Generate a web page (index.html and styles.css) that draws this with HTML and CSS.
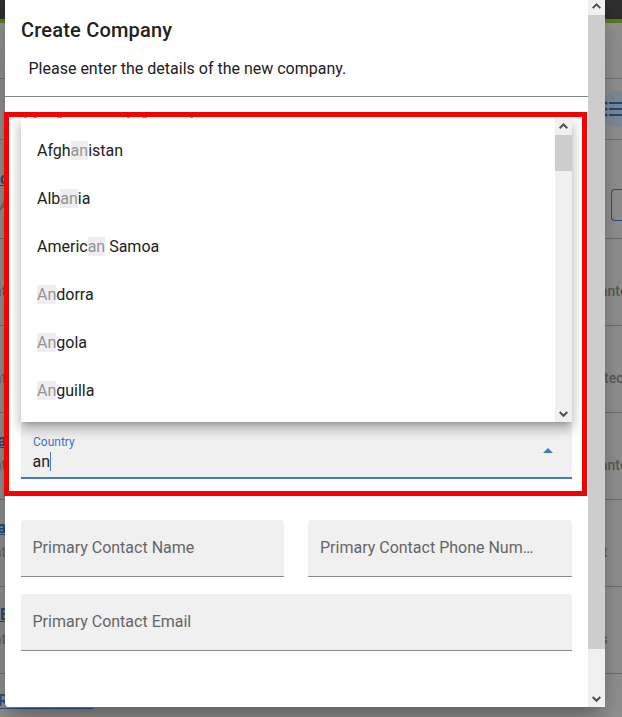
FILE: index.html
```html
<!DOCTYPE html>
<html lang="en">
<head>
<meta charset="utf-8">
<title>Create Company</title>
<link rel="stylesheet" href="styles.css">
</head>
<body>
<div class="page">
  <div class="topbar"></div>
  <div class="toolbar-space"></div>
  <div class="toolbar">
    <div class="view-toggle">
      <svg width="26" height="18" viewBox="0 0 26 18"><g fill="#234f80"><circle cx="6" cy="3" r="1.6"/><circle cx="6" cy="9" r="1.6"/><circle cx="6" cy="15" r="1.6"/><path d="M9 2h17v2H9zM9 8h17v2H9zM9 14h17v2H9z"/></g></svg>
    </div>
  </div>
  <div class="row tall"><div class="cell"><b class="link start">c</b><i class="sub start">A</i></div><div class="outline-button"></div></div>
  <div class="row"><div class="cell"><span class="mid">nt</span></div><div class="side">ante</div></div>
  <div class="row"><div class="cell"><span class="mid">nt</span></div><div class="side tec">tec</div></div>
  <div class="row"><div class="cell"><b class="link">a</b><span class="sub">nt</span></div><div class="side">ante</div></div>
  <div class="row"><div class="cell"><b class="link">a</b><span class="sub">nt</span></div><div class="side blue short">nt</div></div>
  <div class="row"><div class="cell"><b class="link start">E</b><span class="sub">nt</span></div><div class="side blue as">as</div></div>
  <div class="row last"><div class="last-link">R</div></div>
</div>

<div class="dialog">
  <div class="content">
    <header class="head">
      <h1>Create Company</h1>
      <p>Please enter the details of the new company.</p>
    </header>
    <div class="form">
      <div class="field country">
        <div><label>Country</label><div class="value">an<span class="caret"></span></div></div>
        <span class="arrow"></span>
      </div>
      <div class="pair">
        <div class="field">Primary Contact Name</div>
        <div class="field phone">Primary Contact Phone Num…</div>
      </div>
      <div class="field">Primary Contact Email</div>
    </div>
  </div>
  <div class="scrollbar main-scroll">
    <svg class="up" width="17" height="15" viewBox="0 0 17 15"><path d="M4.7 8.1 8.5 4.3l3.8 3.8"/></svg>
    <div class="thumb"></div>
    <svg class="down" width="17" height="17" viewBox="0 0 17 17"><path d="M4.7 7 8.5 10.8 12.3 7"/></svg>
  </div>
</div>

<div class="highlight">
  <svg class="heading-edge" width="180" height="1" viewBox="0 0 180 1"><path fill="#b0a34b" d="M3 0h3v1H3zM12 0h4v1h-4zM36 0h5v1h-5zM106 0h3v1h-3zM121 0h5v1h-5zM169 0h3v1h-3z"/></svg>
  <div class="menu">
    <ul>
      <li>Afgh<mark>an</mark>istan</li>
      <li>Alb<mark>an</mark>ia</li>
      <li>Americ<mark>an</mark> Samoa</li>
      <li><mark>An</mark>dorra</li>
      <li><mark>An</mark>gola</li>
      <li><mark>An</mark>guilla</li>
    </ul>
    <div class="scrollbar">
      <svg class="up" width="17" height="17" viewBox="0 0 17 17"><path d="M4.7 10.3 8.5 6.5l3.8 3.8"/></svg>
      <div class="thumb"></div>
      <svg class="down" width="17" height="17" viewBox="0 0 17 17"><path d="M4.7 7 8.5 10.8 12.3 7"/></svg>
    </div>
  </div>
</div>
</body>
</html>
```
FILE: styles.css
```css
* { box-sizing: border-box; }
body {
  margin: 0;
  width: 622px;
  height: 717px;
  overflow: hidden;
  position: relative;
  font-family: Roboto, "Liberation Sans", sans-serif;
  font-size: 16px;
  color: #212121;
}
svg { display: block; }

.page { height: 717px; background: #989898; overflow: hidden; }
.topbar { height: 23px; background: #303030; border-bottom: 4px solid #5d8021; }
.toolbar-space { height: 56px; border-bottom: 1px solid #7c7c7c; }
.toolbar { height: 61px; padding: 12px 0 0 600px; border-bottom: 1px solid #7c7c7c; }
.view-toggle {
  width: 36px;
  height: 36px;
  padding-top: 9px;
  border-radius: 18px;
  background: #8792a1;
}
.row {
  height: 87px;
  border-bottom: 1px solid #747474;
  display: flex;
  justify-content: space-between;
  font-size: 14px;
  color: #666;
}
.row.tall { height: 99px; }
.row.last { border: 0; height: 44px; }
.cell {
  width: 6px;
  display: flex;
  flex-direction: column;
  align-items: flex-end;
}
.link {
  margin: 18px 0 2px;
  height: 20px;
  line-height: 20px;
  color: #264f7e;
  font-size: 16px;
  text-decoration: underline;
}
.start { align-self: flex-start; }
.sub { height: 24px; line-height: 24px; }
.tall .link { margin: 29px 0 0; }
.tall .sub { line-height: 32px; }
.mid { margin-top: 43px; line-height: 18px; }
.side { width: 22px; padding-top: 43px; line-height: 18px; font-weight: 500; color: #5e5e5e; }
.tec { width: 18px; }
.blue { color: #586273; }
.short { width: 27px; }
.as { width: 29px; }
.outline-button { width: 11px; height: 32px; margin-top: 49px; border: 1px solid #28588d; border-right: 0; border-radius: 4px 0 0 4px; }
.last-link {
  width: 95px;
  height: 35px;
  margin-left: -2px;
  padding-top: 17px;
  line-height: 20px;
  font-size: 16px;
  font-weight: 700;
  color: #2b5788;
  border-bottom: 1px solid #2b5788;
}

.dialog {
  position: absolute;
  left: 5px;
  top: 0;
  width: 600px;
  height: 707px;
  display: flex;
  background: #fff;
  border-radius: 0 0 0 4px;
  box-shadow: 0 11px 15px -7px rgba(0,0,0,.2), 0 24px 38px 3px rgba(0,0,0,.14), 0 9px 46px 8px rgba(0,0,0,.12);
}
.content { width: 583px; }
.head { height: 97px; padding: 18px 16px 0; border-bottom: 1px solid #858585; }
h1 { margin: 0; font-size: 20px; line-height: 24px; font-weight: 500; letter-spacing: .2px; }
p { margin: 15px 0 0 7.5px; line-height: 24px; }
.form { padding: 325px 16px 0; display: flex; flex-direction: column; }
.field {
  height: 57px;
  padding: 0 11.5px;
  line-height: 55px;
  color: #666;
  background: #f0f0f0;
  border-bottom: 1px solid #8a8a8a;
  border-radius: 4px 4px 0 0;
}
.phone { padding: 0 12px; }
.country {
  display: flex;
  justify-content: space-between;
  padding: 0 12px;
  border-bottom: 2px solid #3f7cc4;
  border-radius: 0;
  line-height: normal;
}
.country label { display: block; margin-top: 12px; font-size: 12px; line-height: 16px; color: #3877bf; }
.value { display: flex; align-items: center; height: 22px; margin-left: -.5px; color: #212121; }
.caret { width: 1px; height: 19px; background: #3f7cc4; }
.arrow { margin: 26px 7px 0 0; width: 0; height: 0; align-self: flex-start; border: 5px solid transparent; border-top: 0; border-bottom-color: #3f7cc4; }
.pair { display: grid; grid-template-columns: 263px 264px; gap: 24px; margin: 41px 0 17px; }

.scrollbar { width: 17px; background: #f0f0f0; display: flex; flex-direction: column; }
.scrollbar path { fill: none; stroke: #505050; stroke-width: 2; }
.scrollbar .down { margin-top: auto; }
.thumb { height: 36px; background: #cdcdcd; }
.main-scroll .thumb { height: 634px; }

.highlight {
  position: absolute;
  left: 4px;
  top: 112px;
  width: 583px;
  height: 384px;
  border: 5px solid #f70000;
}
.heading-edge { position: absolute; left: 12px; top: 0; }
.menu {
  margin: 1px 10px 0 12px;
  height: 304px;
  display: flex;
  background: #fff;
  box-shadow: 0 5px 5px -3px rgba(0,0,0,.2), 0 8px 10px 1px rgba(0,0,0,.14), 0 3px 14px 2px rgba(0,0,0,.12);
  clip-path: inset(0 -10px -40px -12px);
}
ul { list-style: none; margin: 0; padding: 9px 0 0 16px; flex: 1; }
li { height: 48px; line-height: 48px; }
mark { background: #eee; color: #949494; }
```
